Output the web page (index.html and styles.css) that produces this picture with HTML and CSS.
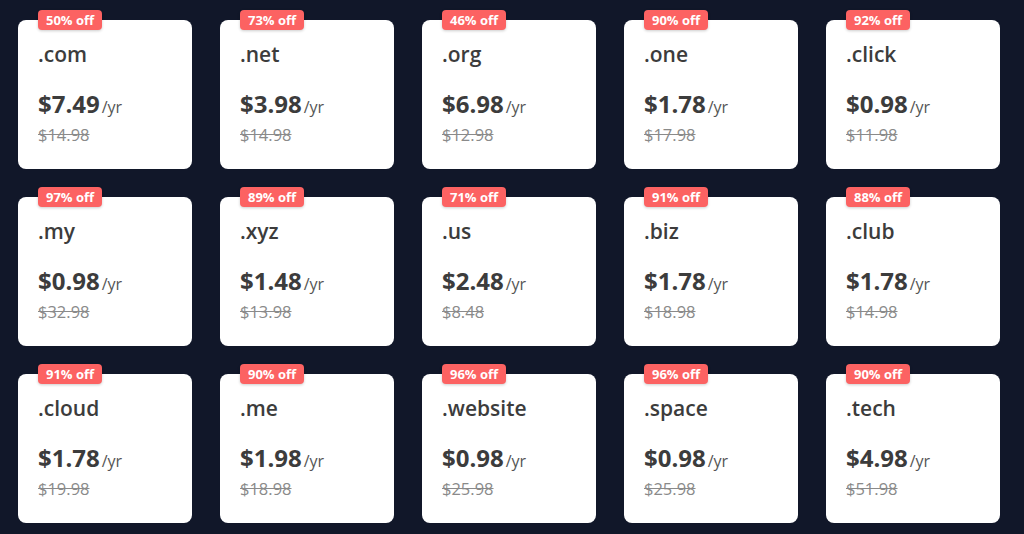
FILE: index.html
```html
<!DOCTYPE html>
<html lang="en">
<head>
<meta charset="utf-8">
<title>Domain deals</title>
<link rel="stylesheet" href="styles.css">
</head>
<body>
<main class="grid">
  <div class="card"><span class="badge">50% off</span><div class="tld">.com</div><div class="price">$7.49<span class="per">/yr</span></div><div class="old">$14.98</div></div>
  <div class="card"><span class="badge">73% off</span><div class="tld">.net</div><div class="price">$3.98<span class="per">/yr</span></div><div class="old">$14.98</div></div>
  <div class="card"><span class="badge">46% off</span><div class="tld">.org</div><div class="price">$6.98<span class="per">/yr</span></div><div class="old">$12.98</div></div>
  <div class="card"><span class="badge">90% off</span><div class="tld">.one</div><div class="price">$1.78<span class="per">/yr</span></div><div class="old">$17.98</div></div>
  <div class="card"><span class="badge">92% off</span><div class="tld">.click</div><div class="price">$0.98<span class="per">/yr</span></div><div class="old">$11.98</div></div>

  <div class="card"><span class="badge">97% off</span><div class="tld">.my</div><div class="price">$0.98<span class="per">/yr</span></div><div class="old">$32.98</div></div>
  <div class="card"><span class="badge">89% off</span><div class="tld">.xyz</div><div class="price">$1.48<span class="per">/yr</span></div><div class="old">$13.98</div></div>
  <div class="card"><span class="badge">71% off</span><div class="tld">.us</div><div class="price">$2.48<span class="per">/yr</span></div><div class="old">$8.48</div></div>
  <div class="card"><span class="badge">91% off</span><div class="tld">.biz</div><div class="price">$1.78<span class="per">/yr</span></div><div class="old">$18.98</div></div>
  <div class="card"><span class="badge">88% off</span><div class="tld">.club</div><div class="price">$1.78<span class="per">/yr</span></div><div class="old">$14.98</div></div>

  <div class="card"><span class="badge">91% off</span><div class="tld">.cloud</div><div class="price">$1.78<span class="per">/yr</span></div><div class="old">$19.98</div></div>
  <div class="card"><span class="badge">90% off</span><div class="tld">.me</div><div class="price">$1.98<span class="per">/yr</span></div><div class="old">$18.98</div></div>
  <div class="card"><span class="badge">96% off</span><div class="tld">.website</div><div class="price">$0.98<span class="per">/yr</span></div><div class="old">$25.98</div></div>
  <div class="card"><span class="badge">96% off</span><div class="tld">.space</div><div class="price">$0.98<span class="per">/yr</span></div><div class="old">$25.98</div></div>
  <div class="card"><span class="badge">90% off</span><div class="tld">.tech</div><div class="price">$4.98<span class="per">/yr</span></div><div class="old">$51.98</div></div>
</main>
</body>
</html>
```

FILE: styles.css
```css
html, body {
  margin: 0;
  padding: 0;
}
body {
  background: #111729;
  font-family: "Open Sans", "Lato", "Liberation Sans", sans-serif;
  width: 1024px;
  height: 534px;
  overflow: hidden;
}
.grid {
  display: grid;
  grid-template-columns: repeat(5, 174px);
  grid-auto-rows: 149px;
  column-gap: 28px;
  row-gap: 28px;
  padding: 20px 0 0 17.5px;
}
.card {
  position: relative;
  background: #ffffff;
  border-radius: 8px;
  padding: 21px 20.5px 0;
  display: flex;
  flex-direction: column;
  align-items: flex-start;
}
.badge {
  position: absolute;
  left: 20.5px;
  top: -10px;
  height: 20px;
  padding: 0 8px;
  background: #fc6262;
  color: #ffffff;
  font-size: 13px;
  font-weight: 700;
  line-height: 20px;
  border-radius: 4px;
  box-shadow: 0 1px 3px rgba(0, 0, 0, 0.2);
}
.tld {
  font-size: 21px;
  line-height: 26px;
  font-weight: 600;
  color: #3c3c3c;
}
.price {
  margin-top: 23px;
  font-size: 24px;
  line-height: 28px;
  font-weight: 700;
  color: #3c3c3c;
}
.per {
  font-size: 16px;
  font-weight: 400;
  color: #555;
  margin-left: 2px;
}
.old {
  margin-top: 4px;
  font-size: 16.5px;
  line-height: 20px;
  color: #8a8a8a;
  text-decoration: line-through;
}
```
